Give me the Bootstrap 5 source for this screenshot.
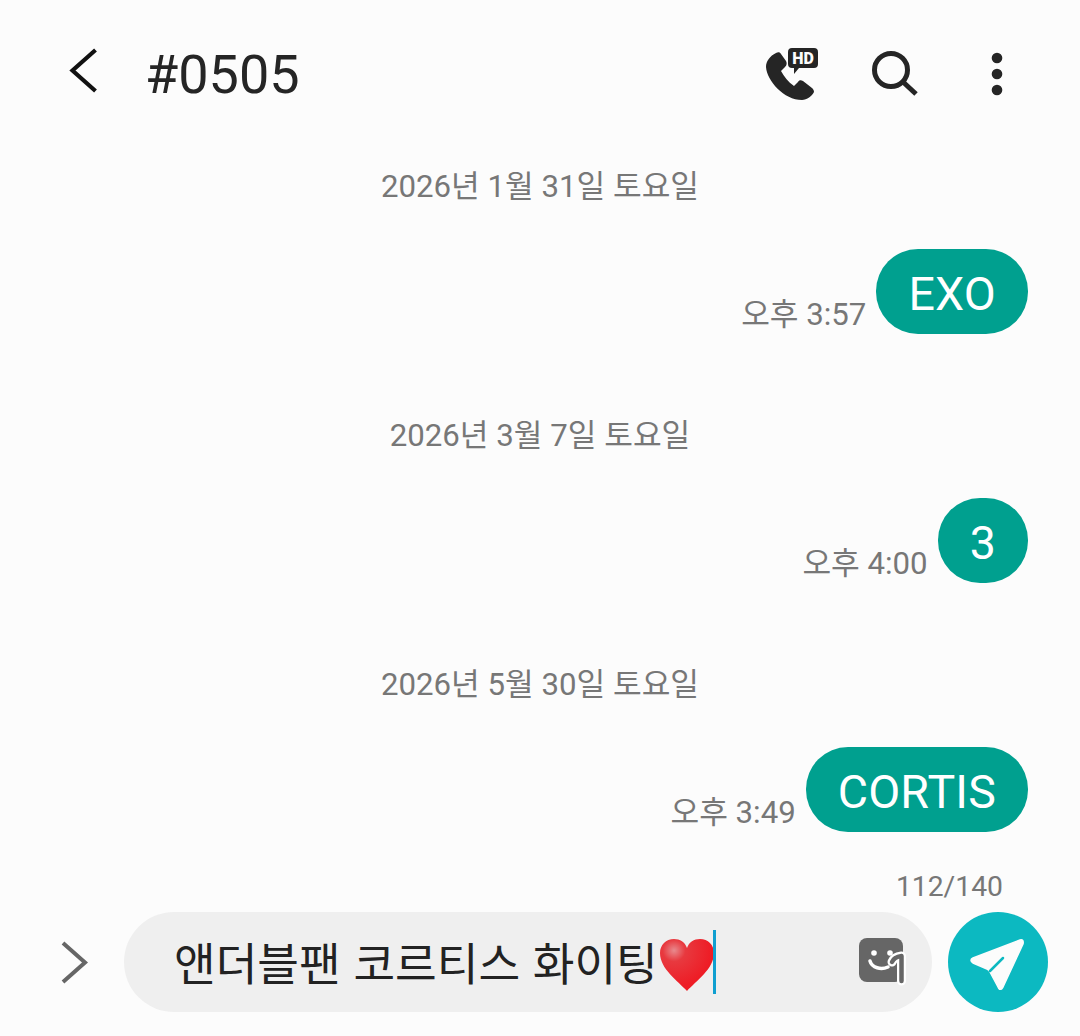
<!DOCTYPE html>
<html lang="ko">

<head>
    <meta charset="UTF-8" />
    <meta name="viewport" content="width=device-width, initial-scale=1" />
    <title>#0505</title>
    <link href="https://cdn.jsdelivr.net/npm/bootstrap@5.3.0/dist/css/bootstrap.min.css" rel="stylesheet" />
    <style>
        body {
            background-color: #fcfcfc;
            font-family: Roboto, "Noto Sans CJK KR", sans-serif;
            width: 1080px;
            height: 1036px;
            overflow: hidden;
        }

        .top-bar {
            height: 150px;
            padding: 0 76px 0 68px;
            color: #252525;
        }

        .back-ico {
            margin-bottom: 5px;
        }

        .top-title {
            font-size: 54px;
            line-height: 1;
            margin-left: 45px;
        }

        .top-icons {
            margin-bottom: 3px;
        }

        .search-ico {
            margin-left: 54px;
        }

        .dots-ico {
            margin-left: 72px;
        }

        .date-line {
            height: 72px;
            font-size: 31.2px;
            color: #777;
            line-height: 73px;
        }

        .msg-row {
            padding: 27px 52px 0 0;
            height: 177px;
        }

        .msg-row-last {
            height: 153px;
        }

        .bubble-out {
            background-color: #00a08f;
            color: #fff;
            height: 85px;
            border-radius: 42px;
            padding: 3px 32px 0;
            font-size: 46.5px;
            letter-spacing: 0.2px;
            line-height: 85px;
            text-align: center;
        }

        .msg-time {
            font-size: 31.2px;
            color: #777;
            margin-right: 10px;
            line-height: 1;
            padding-bottom: 4px;
        }

        .char-count {
            font-size: 28.3px;
            line-height: 1;
            color: #777;
            padding-right: 77px;
            height: 39px;
        }

        .input-row {
            padding: 0 32px 0 60px;
            height: 100px;
        }

        .input-pill {
            background-color: #efefef;
            width: 808px;
            height: 100px;
            border-radius: 50px;
            margin-left: 35px;
            padding: 0 23px 0 50px;
        }

        .input-text {
            font-family: "Noto Sans CJK KR", sans-serif;
            font-size: 45.3px;
            color: #222;
            line-height: 1;
        }

        .heart-emoji {
            margin: 6px -1px 0 2px;
        }

        .caret-line {
            width: 3px;
            height: 64px;
            background-color: #0f9fd0;
            position: relative;
        }

        .send-btn {
            width: 100px;
            height: 100px;
            border-radius: 50%;
            background-color: #0cb9c1;
            margin-left: 16px;
        }
    </style>
</head>

<body>
    <!-- header -->
    <div class="top-bar d-flex align-items-center">
        <svg class="back-ico" width="32" height="50" viewBox="0 0 32 50">
            <path d="M27.5 2 L4.5 22.5 L27.5 43" fill="none" stroke="#111" stroke-width="4.2" />
        </svg>
        <div class="top-title">#0505</div>
        <div class="top-icons d-flex align-items-center ms-auto">
            <svg width="52" height="52" viewBox="0 0 52 52">
                <path d="M10 5 C4 8 0 13 0 19 C1 33 18 52 36 52 C41 52 46 48 48 44 C48 42 47 41 46 40 L37 33 C35 32 33 32 32 34 L28 38 C22 34 18 28 15 23 L19 19 C21 17 21 15 20 13 L15 6 C14 4 12 4 10 5 Z" fill="#252525" />
                <path d="M26 0 H48 Q52 0 52 4 V16 Q52 20 48 20 H33 L28 26 V20 H26 Q22 20 22 16 V4 Q22 0 26 0 Z" fill="#252525" />
                <text x="37" y="15.5" text-anchor="middle" font-family="Roboto, sans-serif" font-weight="900" font-size="16" fill="#fcfcfc">HD</text>
            </svg>
            <svg class="search-ico" width="46" height="46" viewBox="0 0 46 46">
                <circle cx="19" cy="19" r="16.5" fill="none" stroke="#252525" stroke-width="5" />
                <path d="M30 30 L44 43" stroke="#252525" stroke-width="5" fill="none" />
            </svg>
            <svg class="dots-ico" width="14" height="44" viewBox="0 0 14 44">
                <circle cx="7" cy="6" r="5.3" fill="#252525" />
                <circle cx="7" cy="22" r="5.3" fill="#252525" />
                <circle cx="7" cy="38" r="5.3" fill="#252525" />
            </svg>
        </div>
    </div>

    <!-- messages -->
    <div class="date-line text-center">2026년 1월 31일 토요일</div>
    <div class="msg-row d-flex justify-content-end align-items-start">
        <div class="d-flex align-items-end">
            <span class="msg-time">오후 3:57</span>
            <div class="bubble-out">EXO</div>
        </div>
    </div>
    <div class="date-line text-center">2026년 3월 7일 토요일</div>
    <div class="msg-row d-flex justify-content-end align-items-start">
        <div class="d-flex align-items-end">
            <span class="msg-time">오후 4:00</span>
            <div class="bubble-out">3</div>
        </div>
    </div>
    <div class="date-line text-center">2026년 5월 30일 토요일</div>
    <div class="msg-row msg-row-last d-flex justify-content-end align-items-start">
        <div class="d-flex align-items-end">
            <span class="msg-time">오후 3:49</span>
            <div class="bubble-out">CORTIS</div>
        </div>
    </div>

    <!-- composer -->
    <div class="char-count text-end">112/140</div>
    <div class="input-row d-flex align-items-center">
        <svg width="29" height="44" viewBox="0 0 29 44">
            <path d="M3 3 L25 22.5 L3 42" fill="none" stroke="#666" stroke-width="4" />
        </svg>
        <div class="input-pill d-flex align-items-center">
            <span class="input-text">앤더블팬 코르티스 화이팅</span>
            <svg class="heart-emoji" width="54" height="52" viewBox="0 0 54 52">
                <defs>
                    <radialGradient id="heartShine" cx="0.26" cy="0.22" r="0.7">
                        <stop offset="0" stop-color="#e88a8e" />
                        <stop offset="0.3" stop-color="#e8393f" />
                        <stop offset="1" stop-color="#ee1c25" />
                    </radialGradient>
                </defs>
                <path d="M27 52 C18 42 0 30 0 14 C0 6 6 0 14 0 C20 0 25 3 27 9 C29 3 34 0 40 0 C48 0 54 6 54 14 C54 30 36 42 27 52 Z" fill="url(#heartShine)" />
            </svg>
            <span class="caret-line"></span>
            <svg class="ms-auto" width="50" height="48" viewBox="0 0 50 48">
                <rect x="0" y="0" width="44" height="44" rx="8" fill="#666" />
                <circle cx="15" cy="15" r="2.8" fill="#fff" />
                <circle cx="31" cy="15" r="2.8" fill="#fff" />
                <path d="M11 23 C13 30 22 32 29 29" fill="none" stroke="#fff" stroke-width="3.5" stroke-linecap="round" />
                <path d="M33 24 Q35 19 42.5 18 L42.5 43" fill="none" stroke="#fff" stroke-width="9" stroke-linecap="round" stroke-linejoin="round" />
                <path d="M33 24 Q35 19 42.5 18 L42.5 43" fill="none" stroke="#666" stroke-width="4.5" stroke-linecap="round" stroke-linejoin="round" />
            </svg>
        </div>
        <div class="send-btn d-flex align-items-center justify-content-center">
            <svg width="56" height="56" viewBox="0 0 56 56">
                <path d="M50 6 Q54 5 53 10 L33 53 Q30 58 28 53 L20 38 Q19 36 17 35 L3 29 Q-1 26 3 24 Z" fill="#fcfcfc" stroke="#fcfcfc" stroke-width="1.5" stroke-linejoin="round" />
                <path d="M20 37 L33 24" stroke="#0cb9c1" stroke-width="2.5" stroke-linecap="round" />
            </svg>
        </div>
    </div>
</body>

</html>
